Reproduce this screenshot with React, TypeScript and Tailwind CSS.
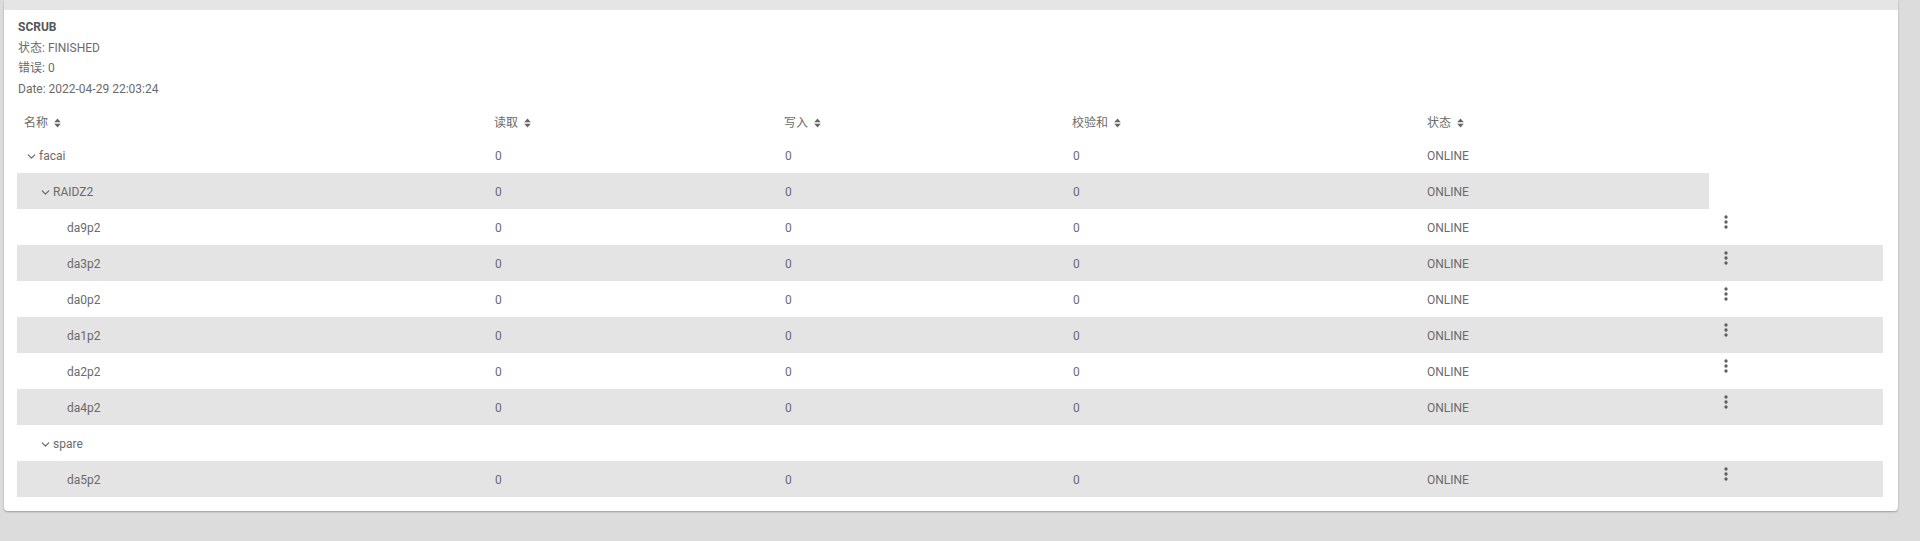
import { ChevronDown } from 'lucide-react';

type Row = {
  name: string;
  level: number;
  group?: boolean;
  read?: string;
  write?: string;
  checksum?: string;
  status?: string;
  actions?: boolean;
};

const ROWS: Row[] = [
  { name: 'facai', level: 0, group: true, read: '0', write: '0', checksum: '0', status: 'ONLINE' },
  { name: 'RAIDZ2', level: 1, group: true, read: '0', write: '0', checksum: '0', status: 'ONLINE' },
  { name: 'da9p2', level: 2, read: '0', write: '0', checksum: '0', status: 'ONLINE', actions: true },
  { name: 'da3p2', level: 2, read: '0', write: '0', checksum: '0', status: 'ONLINE', actions: true },
  { name: 'da0p2', level: 2, read: '0', write: '0', checksum: '0', status: 'ONLINE', actions: true },
  { name: 'da1p2', level: 2, read: '0', write: '0', checksum: '0', status: 'ONLINE', actions: true },
  { name: 'da2p2', level: 2, read: '0', write: '0', checksum: '0', status: 'ONLINE', actions: true },
  { name: 'da4p2', level: 2, read: '0', write: '0', checksum: '0', status: 'ONLINE', actions: true },
  { name: 'spare', level: 1, group: true },
  { name: 'da5p2', level: 2, read: '0', write: '0', checksum: '0', status: 'ONLINE', actions: true },
];

const COLS = 'grid grid-cols-[470px_290px_288px_355px_289px_174px]';

const indents = ['pl-[9px]', 'pl-[23px]', 'pl-[37px]'];

function SortIcon() {
  return (
    <svg width="7" height="10" viewBox="0 0 7 10" className="ml-[6px] fill-[#666]">
      <path d="M3.5 0.5 L6.8 4.2 L0.2 4.2 Z" />
      <path d="M3.5 9.5 L6.8 5.8 L0.2 5.8 Z" />
    </svg>
  );
}

function Kebab() {
  return (
    <svg width="20" height="20" viewBox="0 0 24 24" className="fill-[#5f5f5f]">
      <circle cx="12" cy="6" r="2" />
      <circle cx="12" cy="12" r="2" />
      <circle cx="12" cy="18" r="2" />
    </svg>
  );
}

function Header({ label }: { label: string }) {
  return (
    <div className="flex items-center pl-[7px]">
      <span>{label}</span>
      <SortIcon />
    </div>
  );
}

export default function App() {
  return (
    <div
      className="w-[1920px] h-[541px] bg-[#dcdcdc] text-[12px] text-[#6b6b6b] overflow-hidden"
      style={{ fontFamily: 'Roboto, "Noto Sans CJK SC", sans-serif' }}
    >
      <div className="ml-[4px] w-[1894px] bg-white rounded-b-[4px] shadow-[0_1px_2px_rgba(0,0,0,0.3)] pb-[14px]">
        <div className="h-[10px] bg-[#e5e5e5]" />

        {/* scrub summary */}
        <div className="pl-[14px] pt-[7px] leading-[20.5px]">
          <div className="font-bold text-[#555]">SCRUB</div>
          <div>状态: FINISHED</div>
          <div>错误: 0</div>
          <div>Date: 2022-04-29 22:03:24</div>
        </div>

        <div className="ml-[13px] w-[1866px]">
          <div className={`${COLS} h-[38px] pt-[9px] items-center leading-[16px]`}>
            <Header label="名称" />
            <Header label="读取" />
            <Header label="写入" />
            <Header label="校验和" />
            <Header label="状态" />
            <div />
          </div>

          {ROWS.map((r, i) => {
            const striped = i % 2 === 1;
            const bg = striped ? 'bg-[#e4e4e4]' : '';
            return (
              <div key={r.name} className={`${COLS} h-[36px] items-stretch`}>
                <div className={`flex items-center pt-[2px] ${indents[r.level]} ${bg}`}>
                  <span className="w-[13px] flex items-center">
                    {r.group && <ChevronDown size={13} strokeWidth={2.2} className="text-[#666] -ml-[1px]" />}
                  </span>
                  <span>{r.name}</span>
                </div>
                <div className={`flex items-center pt-[2px] pl-[8px] ${bg}`}>{r.read}</div>
                <div className={`flex items-center pt-[2px] pl-[8px] ${bg}`}>{r.write}</div>
                <div className={`flex items-center pt-[2px] pl-[8px] ${bg}`}>{r.checksum}</div>
                <div className={`flex items-center pt-[2px] pl-[7px] ${bg}`}>{r.status}</div>
                <div className={`flex items-start pl-[7px] pt-[3px] ${r.group ? '' : bg}`}>
                  {r.actions && <Kebab />}
                </div>
              </div>
            );
          })}
        </div>
      </div>
    </div>
  );
}
